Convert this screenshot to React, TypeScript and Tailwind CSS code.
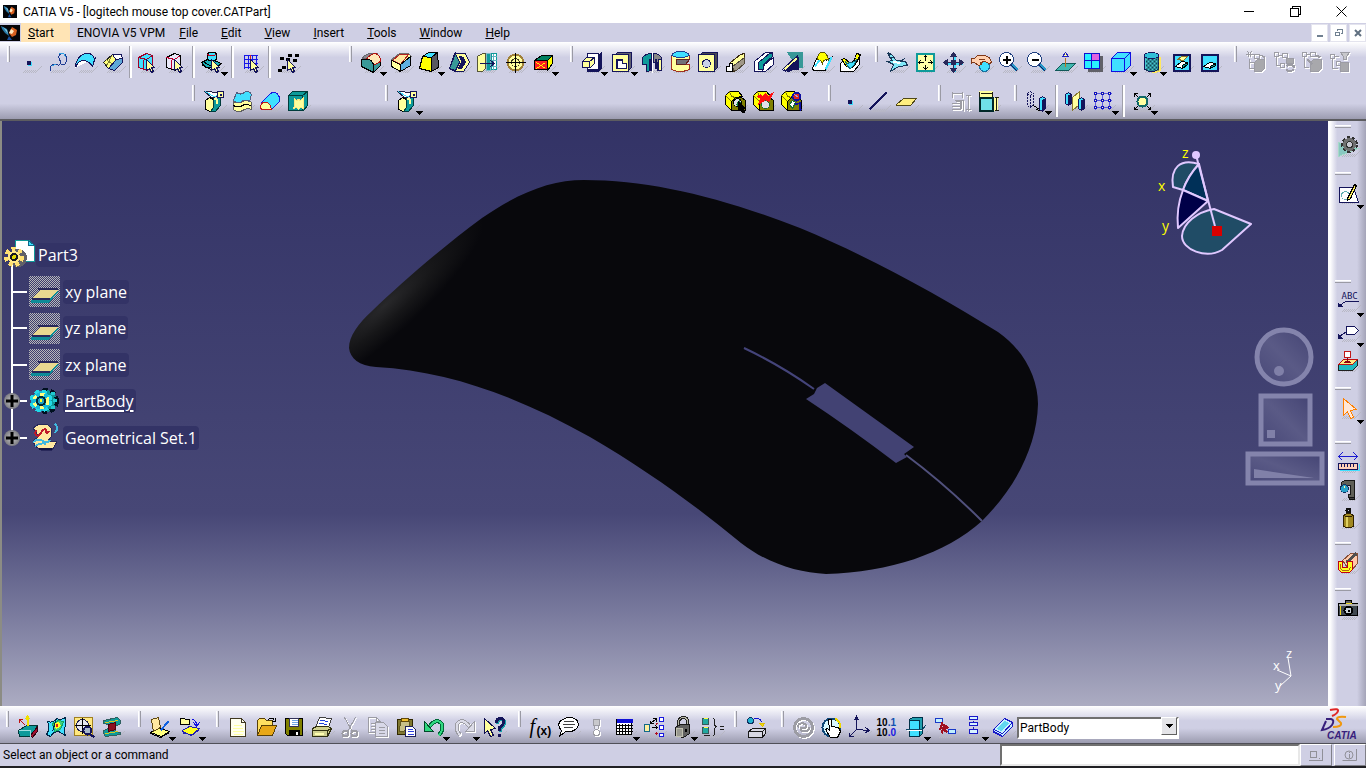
import type { ReactNode } from "react";

const NAVY = "#14145a";
const TEAL = "#0e9a9a";
const CYAN = "#40e0ff";
const CREAM = "#ffff9c";

type ShapeProps = { d: string; f?: string; s?: string; w?: number };

function P({ d, f = "none", s = "currentColor", w = 1 }: ShapeProps) {
  return <path d={d} fill={f} stroke={s} strokeWidth={w} />;
}

const cursor = <P d="M11 9l8 8h-3l2 4-2 1-2-4-3 2z" f={CREAM} />;

const padBody = (
  <>
    <P d="M8 8h10l4 3v10H8z" f="#808000" s="#000" />
    <P d="M2 6l4-4h9l4 5-7 1-4 4v9l-6-6z" f="#ffff00" s="#000" />
    <P d="M2 6l6 6M6 2l2 5 4 1" s="#807800" />
  </>
);

const knife = (
  <>
    <P d="M3 11l4-3 4 2v8l-3 4-5-2z" f={CREAM} s="#000" />
    <P d="M11 9l7-1v8l-5 6H8l3-4z" f={TEAL} s="#003c3c" />
    <P d="M12 9l2 1v4" s={CREAM} w={2} />
    <P d="M2 2l14 1v4l-7 1z" f="#fff" s="#202040" />
    <P d="M3 2l8 5 5-1" s={CYAN} />
    <P d="M15 2h6v6h-6z" f={CREAM} />
    <P d="M18 4v2" w={2} />
  </>
);

const icons: Record<string, ReactNode> = {
  point: (
    <>
      <P d="M10 11h3v3h-3z" f={NAVY} />
      <P d="M14 11v4h-4" s={CYAN} />
    </>
  ),
  spline: (
    <>
      <P d="M5 21q-1-8 5-7 6 2 5-3-4-6 1-8 6 0 5 7-1 5-5 4" s="#1a3890" />
      <P d="M6 16q3-3 5-1M14 3q5-2 6 4" s="#30a0e0" />
    </>
  ),
  surface: (
    <>
      <P d="M2 17q3-8 10-7 4 0 7 5l3-8" f="#fff" s={NAVY} />
      <P d="M2 14q3-11 12-11 6 0 7 6l-2 7q-4-6-9-6t-8 6z" f={CYAN} />
    </>
  ),
  box: (
    <>
      <P d="M2 12L11 4l4 5-8 9z" f="#ffff80" s="#202020" />
      <P d="M11 4h9l1 5-6 1z" f="#fff" />
      <P d="M15 9l6-1v4l-8 8-6-2z" f="#5fa8d8" />
      <P d="M5 9l6 5M10 6l-5 9" s="#808030" />
    </>
  ),
  boxSelect: (
    <>
      <P d="M3 7l8-4 6 2v9l-5 6-9-3z" f={CYAN} s="#a00028" />
      <P d="M3 7l8 2 6-4M8 9v9" s="#a00028" />
      {cursor}
    </>
  ),
  boxOutline: (
    <>
      <P d="M3 7l8-4 6 2v9l-5 6-9-3z" f="#e8e8f8" s="#000" />
      <P d="M3 7l8 2 6-4M8 9v9" s="#c00030" />
      {cursor}
    </>
  ),
  stack: (
    <>
      <P d="M1 12l8-4 12 5-8 6q-3-3-8-2z" f="#18b0b8" s="#000" />
      <P d="M7 3q4-3 9 0v6q-5 3-9 0z" f={CYAN} s="#000" />
      <P d="M7 4q4 3 9 0" s="#c00020" />
      <P d="M4 12l7 4M2 15l9 4" s="#000" />
      {cursor}
    </>
  ),
  gridSelect: (
    <>
      <P d="M5 4v14M9 4v14M13 4v14M17 4v14M4 5h14M4 9h14M4 13h14M4 17h14" s="#1818e8" />
      <P d="M11 4v14" s="#d02020" />
      {cursor}
    </>
  ),
  points: (
    <>
      {[[5, 7], [13, 4], [20, 4], [11, 8], [3, 19], [7, 16], [18, 9]].map(([x, y]) => (
        <rect key={`${x}-${y}`} x={x - 2} y={y - 1} width="4" height="3" fill="#000" />
      ))}
      {cursor}
    </>
  ),
  splitTool: knife,
  thick: (
    <>
      <P d="M3 12q5 3 9 0t9 1v7q-5-2-9 1t-9-1z" f={CREAM} s="#606060" />
      <P d="M6 3q4 3 8 0t7 2l-2 7q-5-3-8 0t-8-1z" f={CYAN} s="#506080" />
      <P d="M3 16q5 3 9 0t9 1" s="#000" />
    </>
  ),
  closeSurface: (
    <>
      <P d="M3 13l9-9q5-3 8 2t0 7l-7 7z" f={CYAN} s="#1818e0" />
      <P d="M2 18q0-6 6-5 4 1 5 7H3z" f={CREAM} s="#c01818" />
    </>
  ),
  sew: (
    <>
      <P d="M2 6l4-4h15v14l-4 5H2z" f={TEAL} s="#003c3c" />
      <P d="M2 6h14v15M16 6l5-4" s="#003c3c" />
      <P d="M8 9l2 2 2-1 2 1 3-3v11l-3-1-2 2-2-2-3 1 1-3z" f={CREAM} s="#ffe880" />
    </>
  ),
  fillet: (
    <>
      <P d="M2 9l3-4 5-2h8l-9 4z" f="#888890" s="#686870" />
      <P d="M13 15l8-4v4l-6 6h-2z" f="#389898" s="#000" />
      <P d="M7 8q5-5 9-5 5 2 5 8l-7 4q-1-6-7-7z" f="#ffe8b8" s="#b01010" />
      <P d="M2 9q11-2 12 6v7L2 16z" f="#389898" s="#000" />
    </>
  ),
  chamfer: (
    <>
      <P d="M2 9l8-6h9l3 3-9 9z" f={CREAM} s="#707070" />
      <P d="M3 10l7-6h9l-8 10z" f="#ffe8a0" s="#b02020" />
      <P d="M11 14l10-8v9l-10 6z" f="#5fb0e0" s="#000" />
      <P d="M2 10l9 4v7l-9-5z" f={CREAM} s="#000" />
    </>
  ),
  draft: (
    <>
      <P d="M5 6l6-4h9l-6 5z" f={CYAN} s="#000" />
      <P d="M5 6l9 1v14L2 18z" f="#ffff00" s="#000" />
      <P d="M14 7l6-5 1 15-7 4z" f="#585860" s="#000" />
    </>
  ),
  shell: (
    <>
      <P d="M2 18L7 3h11l4 9-6 9H7z" f={CREAM} />
      <P d="M8 3L2 18l6 2 4-8z" f="#389898" />
      <P d="M12 6l4 1 2 5-4 6h-3l3-7z" f={NAVY} />
    </>
  ),
  thickness: (
    <>
      <P d="M2 6l5-3h3v15l-3 3H2z" f={CREAM} s="#555538" />
      <P d="M11 3h4v17h-4z" f={TEAL} s="#80b8c8" />
      <P d="M16 3h5v16h-5z" f="#fff" s={TEAL} />
      <P d="M18 3v16M16 6h5M16 10h5M16 16h5" s="#60b0c0" />
      <P d="M4 13h14M15 10l4 3-4 3" s={NAVY} />
    </>
  ),
  thread: (
    <>
      <circle cx="12" cy="12" r="8" fill={CREAM} stroke="#a08038" strokeWidth="2" />
      <circle cx="12" cy="12" r="4" fill="none" stroke="#403820" strokeWidth="1" />
      <P d="M12 2v20M2 12h20" s="#000" />
    </>
  ),
  removeFace: (
    <>
      <P d="M3 10l7-5h11l-5 5z" f="#008060" s="#000" />
      <P d="M16 10l5-5v8l-5 7z" f="#ffff00" s="#000" />
      <P d="M3 10h13v9H3z" f="#ff2020" s="#000" />
      <P d="M5 12l9 6M14 12l-9 6" s="#ffff00" />
    </>
  ),
  pad: (
    <>
      <P d="M7 4h12l2-2v16l-3 3H7z" f={NAVY} />
      <P d="M7 3h11v16H7z" f="#fff" />
      <P d="M2 11l4-4h8v6l-4 4H2z" f={CREAM} />
      <P d="M2 11h7v6M9 11l5-4" />
    </>
  ),
  pocket: (
    <>
      <P d="M5 4l2-2h14v15l-3 3z" f="#606070" />
      <P d="M2 4h16v17H2z" f={CREAM} />
      <P d="M6 9h6v4h4v5H6z" f="#fff" />
      <P d="M6 18V9h6" w={2} />
    </>
  ),
  shaft: (
    <>
      <P d="M2 7q3-4 9-4v17l-5 1v-7H2z" f={TEAL} />
      <P d="M13 3q7 0 8 5v12h-4v-8h-4z" f="#888" />
      <P d="M18 9v11h3V9z" f={CREAM} />
      <P d="M9 8v12M15 8v10" w={2} />
      <P d="M12 1v21" s="#fff" />
    </>
  ),
  groove: (
    <>
      <P d="M3 5v14q8 4 18 0v-5H11V9h10V5z" f={CREAM} s="#a03020" />
      <P d="M3 5q2-4 9-4t9 4q-9 4-18 0z" f={CYAN} s="#204090" />
      <P d="M8 9h13l-4 5H8z" f="#707078" s="#602020" />
    </>
  ),
  hole: (
    <>
      <P d="M4 4l2-2h15v15l-3 3z" f="#484850" />
      <P d="M2 4h16v17H2z" f={CREAM} />
      <circle cx="10" cy="13" r="4" fill="#c8d0e8" stroke={NAVY} />
    </>
  ),
  rib: (
    <>
      <P d="M2 16h4v-4L16 4l4-1v4L10 16v5H2z" f={CREAM} s="#382810" />
      <P d="M8 16l12-9v6l-8 7H9z" f="#a09888" s="#504838" />
      <P d="M2 16h3v-3h3v8H2z" f="#fff" s="#000" />
    </>
  ),
  slot: (
    <>
      <P d="M2 11L13 2h7v4l-8 7v8H2z" f="#fff" />
      <P d="M6 12L17 3h3v3l-9 8v5H6z" f={TEAL} />
      <P d="M12 14l9-7v7l-8 7h-3z" f="#fff" />
    </>
  ),
  stiffener: (
    <>
      <P d="M7 2h15v15H17z" f="#389898" s="#389898" />
      <P d="M2 19L17 5l1 6-13 10z" f="#fff" />
      <P d="M6 20L18 7v12h-5l-5 2z" f={NAVY} />
      <P d="M3 18L16 6l1 3L5 20z" f={CREAM} />
    </>
  ),
  multiSection: (
    <>
      <P d="M2 18l4-10 3 3 4-4 3 3 5-3-6 13H3z" f="#fff" s="#000" />
      <P d="M7 9q0-7 5-7t6 8q-4-3-6 3-2-4-5-4z" f="#ffff00" s="#605800" />
      <P d="M4 16l5-6M21 7l-6 12" s={CYAN} w={2} />
    </>
  ),
  removeLoft: (
    <>
      <P d="M2 13l4-4 4 4h5l6-7v8l-6 7H2z" f="#fff" s="#000" />
      <P d="M3 9l3-1 5 4q3 2 6-5l1-4 4 1-4 8-4 5-6-1z" f="#ffff00" s="#000" />
      <P d="M7 11q2 6 5 7 4-3 6-9-4 4-6 3l-4 1z" f={CYAN} s="#106878" />
    </>
  ),
  padSelect: (
    <>
      {padBody}
      <ellipse cx="14" cy="13" rx="4" ry="4" fill="#e0e0e8" stroke="#000" />
      <P d="M13 15l3-4 1 3-2 3z" f="#108040" s="#108040" />
      <P d="M15 12l7 7h-3l2 4h-2l-2-3-2 1z" f="#000" s="#000" />
    </>
  ),
  padFlash: (
    <>
      {padBody}
      <ellipse cx="14" cy="15" rx="4" ry="4" fill="#e0e0e8" stroke="#107030" />
      <P d="M9 5l2 2 3-3 3 3 5-4-5 9-3-2-7 5 2-6-3-2z" f="#ff1010" s="#ff1010" />
    </>
  ),
  padBall: (
    <>
      {padBody}
      <P d="M10 15l3-4 3 2-3 6z" f="#fff" s="#107030" />
      <circle cx="17" cy="7" r="4" fill="#e02020" stroke="#1010a0" strokeWidth="2" />
      <P d="M15 5l4 3" s="#a0a0e8" />
      <P d="M20 12v7l2 2M16 14l3 1" s="#1010a0" w={2} />
    </>
  ),
  plane3: <P d="M2 15l7-6h13l-6 7H2z" f="#ffee80" s="#504818" />,
  line: <P d="M3 20L20 3" w={2} />,
  fly: (
    <>
      <P d="M2 3l4 1 5 6 9 1 2 4-9 1-8 5 3-7-6-3 5-1z" f="#80e8f8" s="#183858" />
      <P d="M3 2l4 3M3 7h4M14 12l6-5" s="#183858" />
      <P d="M8 11l7 2" s="#fff" w={2} />
    </>
  ),
  fitAll: (
    <>
      <P d="M3 3h17v17H3z" f="#ffffa8" s={TEAL} w={2} />
      <P d="M12 5v5M12 19v-5M5 12h5M19 12h-5M10 7l2-2 2 2M10 17l2 2 2-2M7 10l-2 2 2 2M17 10l2 2-2 2" s="#000" />
    </>
  ),
  pan: (
    <>
      <P d="M13 4v17M4 13h17" s={CYAN} w={2} />
      <P d="M12 3v18M3 12h18" s="#28285a" />
      <P d="M9 6l3-4 3 4zM9 18l3 4 3-4zM6 9l-4 3 4 3zM18 9l4 3-4 3zM10 10h4v4h-4z" f="#28285a" s="#28285a" />
    </>
  ),
  rotate: (
    <>
      <circle cx="15" cy="16" r="5" fill={CYAN} stroke="#1870a0" />
      <P d="M2 8h3l3-3h7q6 1 7 7l-2 1-5-2-4 1 1 2-3 1-4-3H2z" f="#ffd0b0" s="#803818" />
      <P d="M9 9h6M2 8v5" s="#803818" />
    </>
  ),
  zoomIn: (
    <>
      <P d="M14 14l6 6" s="#2898c8" w={4} />
      <P d="M14 15l6 6" s={NAVY} />
      <circle cx="9" cy="9" r="7" fill="#fff" stroke="#204080" />
      <P d="M5 9h8M9 5v8" s="#000" w={2} />
    </>
  ),
  zoomOut: (
    <>
      <P d="M14 14l6 6" s="#2898c8" w={4} />
      <P d="M14 15l6 6" s={NAVY} />
      <circle cx="9" cy="9" r="7" fill="#fff" stroke="#204080" />
      <P d="M6 9h7" s="#000" w={2} />
    </>
  ),
  normalView: (
    <>
      <P d="M2 20l7-7h13l-7 7z" f="#40b8b0" s="#105858" />
      <P d="M12 7v9" s="#c07020" />
      <P d="M9 6l3-4 3 4z" f="#ffffa0" s="#2020c0" />
    </>
  ),
  multiView: (
    <>
      <P d="M7 6h14v15H7z" f="#606068" s="#606068" />
      <P d="M3 3h15v15H3z" f="#28f0ff" s="#1010d0" />
      <P d="M11 4h6v6h-6z" f="#e060e0" s="#e060e0" />
      <P d="M3 10h15M10 3v15" s="#1010d0" />
    </>
  ),
  isoView: (
    <>
      <P d="M2 8l6-6h13v13l-6 6H2z" f={CYAN} s="#1010e0" />
      <P d="M2 8h13v13M15 8l6-6" s="#1010e0" />
    </>
  ),
  shading: (
    <>
      <P d="M20 6v14q-3 2-8 2" s="#ffe860" w={2} />
      <P d="M5 5v14q7 4 14 0V5z" f="#48c8d0" s={NAVY} />
      <path d="M6 7h13v13H6z" fill="url(#weave)" />
      <ellipse cx="12" cy="5" rx="7" ry="3" fill="#30c0d8" stroke={NAVY} />
    </>
  ),
  hideShow: (
    <>
      <P d="M4 4h16v16H4z" f={CYAN} s={NAVY} w={2} />
      <P d="M8 9l4-3h6l-4 4z" f={CREAM} s="#887028" />
      <P d="M6 16l6-5 6 1v2l-5 4z" f="#fff" s="#000" />
      <P d="M13 15l5-3v2l-5 4z" f={TEAL} s="#000" />
    </>
  ),
  swapVisible: (
    <>
      <P d="M4 4h16v16H4z" f={CYAN} s={NAVY} w={2} />
      <P d="M6 16l6-4 6 1v2l-5 3z" f="#fff" s="#000" />
      <P d="M13 16l5-3v2l-5 3z" f={TEAL} s="#000" />
    </>
  ),
  treeA: (
    <>
      <P d="M3 1l4 6M7 1L3 7M1 4h8M5 8v10h5M5 12h4M10 4h5v4h-5z" />
      <P d="M10 12l3-3h7v9l-3 3h-7zM16 5l4 1v3" f="#a8a8ac" />
    </>
  ),
  treeB: (
    <>
      <P d="M2 2h4v4H2zM4 6v9h4M6 5h4M10 3h5v4h-5zM8 13h4v4H8z" />
      <P d="M14 8h7v5h-7z" f="#a8a8ac" />
      <P d="M14 16q4-4 7 0M21 19q-4 4-7 0M21 14v3" w={2} />
    </>
  ),
  treeC: (
    <>
      <P d="M2 2h4v4H2zM4 6v11h4M6 4h4M10 2h5v4h-5z" />
      <P d="M10 12l3-3h8v9l-3 3h-8z" f="#a8a8ac" />
      <P d="M7 9l5 5M16 5l4 2" w={2} />
    </>
  ),
  treeD: (
    <>
      <P d="M2 4h4v4H2zM4 8v10h5M6 6h4M8 11h4v4H8z" />
      <P d="M12 12h8v9h-8z" f="#a8a8ac" />
      <P d="M12 2h9l-3 4v3h-3V6z" f="#c8c8cc" />
    </>
  ),
  dimDisabled: (
    <>
      <P d="M4 2v6M14 2v6M4 4h10M6 11h9v10M3 14h9M3 17h9M3 20h9M20 5v16M17 6h5M17 20h5" />
      <P d="M7 11h5v8" w={2} />
    </>
  ),
  dimension: (
    <>
      <P d="M3 2h13v5H3z" f={CREAM} s={CREAM} />
      <P d="M3 2v5M16 2v5M4 4h11" s="#202010" />
      <P d="M3 8h13v13H3z" f="#70e0e8" s="#002828" w={2} />
      <P d="M18 9h3v12h-3z" f={CREAM} s={CREAM} />
      <P d="M20 8v13M18 8h4M18 21h4" s="#202010" />
    </>
  ),
  translate: (
    <>
      <path d="M3 4l3-2 3 2v11l-3 3-3-2zM3 4l3 2 3-2M6 6v11" fill="none" stroke={NAVY} strokeDasharray="2 1" />
      <P d="M9 16l6 4M12 20l3 1v-3" s="#000" />
      <P d="M15 9l3-2 3 2v10l-3 3-3-2z" f={CYAN} />
      <P d="M18 11l3-2v10l-3 3z" f={NAVY} />
    </>
  ),
  mirror: (
    <>
      <P d="M2 5l3-2 3 2v9l-3 2-3-2z" f={CYAN} />
      <P d="M5 6l3-1v9l-3 2z" f={NAVY} />
      <P d="M9 8l7-6v13l-7 6z" f={CREAM} s="#887830" />
      <P d="M15 10l3-2 3 2v9l-3 2-3-2z" f={CYAN} />
      <P d="M18 11l3-1v9l-3 2z" f={NAVY} />
    </>
  ),
  pattern: (
    <>
      <P d="M4 2v18M11 2v18M18 2v18M2 4h18M2 11h18M2 18h18" s="#5858e0" />
      {[4, 11, 18].map((x) =>
        [4, 11, 18].map((y) => (
          <rect key={`${x}-${y}`} x={x - 1} y={y - 1} width="2" height="2" fill={CREAM} stroke="#1010c0" />
        ))
      )}
    </>
  ),
  scale: (
    <>
      <P d="M4 4l4 4M20 4l-4 4M4 20l4-4M20 20l-4-4M4 7V4h3M17 4h3v3M4 17v3h3M20 17v3h-3" s="#000" />
      <circle cx="12" cy="12" r="5" fill="#ffffa0" stroke="#106868" strokeWidth="2" />
    </>
  ),
  apply: (
    <>
      <P d="M2 15l8-5h11l-6 11H3z" f={TEAL} s="#003838" />
      <P d="M14 20l7-9v5l-5 6z" f="#a01030" s="#300010" />
      <P d="M2 15h12v6" s="#a0e0e0" />
      <P d="M9 10L3 4M3 7V4h3" s="#c01010" />
      <P d="M11 10V2M9 4l2-3 2 3" s="#f0e000" w={2} />
    </>
  ),
  analysis: (
    <>
      <P d="M3 6q6 2 9-3 5 2 9-1v8q-2 5 0 10l-7-4q-5 0-8 5l-4-2q4-6 1-13z" f={CYAN} s="#002848" />
      <P d="M8 8l6-3 5 1-3 8-6 2z" f="#40d080" s="#10a860" />
      <P d="M10 9l4-2 2 3-4 3z" f="#ffff20" s="#ffff20" />
      <P d="M12 9h1v2h-1z" f="#e02010" s="#e02010" />
      <P d="M12 3l-4 13" s="#002848" />
    </>
  ),
  target: (
    <>
      <P d="M2 2h18v18H2z" f="#ffe880" s="#a08020" />
      <circle cx="10" cy="10" r="6" fill="#e8e8f0" stroke="#202050" />
      <P d="M10 2v16M2 10h16" s="#000" />
      <circle cx="15" cy="15" r="4" fill="#a8b8c8" stroke={NAVY} strokeWidth="2" />
      <P d="M18 19l4 3" w={2} />
    </>
  ),
  beam: (
    <>
      <P d="M3 5l14-3 3 3v3l-5 3v5l5 1v2L5 21l-2-3v-3l5-2V9L3 8z" f={TEAL} s="#306060" />
      <P d="M8 9l7-2v7l-7 2z" f="#8c1020" s="#500010" />
      <P d="M5 7l13-2M5 18l13-2" s="#d8c820" />
    </>
  ),
  catalog: (
    <>
      <P d="M2 17l8-5 11 4-8 5z" f="#ffff80" s="#000" />
      <P d="M3 4l7-2 2 10-7 4z" f="#ffe8a0" s="#604810" />
      <P d="M12 15l8-9" s="#1060e0" w={2} />
      <P d="M2 18l10 4 9-5" s="#000" />
    </>
  ),
  folderMove: (
    <>
      <P d="M2 3h4l1 1h4v5H2z" f={CREAM} s="#000" />
      <P d="M13 4q5 0 5 6M15 7l3 4 3-4" s="#1010e0" />
      <P d="M4 15l7-4 10 2-7 6-9-1z" f="#ffff20" s="#2020b0" />
      <P d="M4 16l9 4 8-6" s="#2020b0" />
    </>
  ),
  newDoc: (
    <>
      <P d="M4 3h11l4 4v14H4z" f="#fffff0" s="#403820" />
      <P d="M15 3v4h4" s="#403820" />
      <P d="M7 10h8M6 13h10M6 16h11M7 19h9" s="#ffffa0" />
    </>
  ),
  open: (
    <>
      <P d="M3 5l2-2h5l2 2h6v15H3z" f="#ffe060" s="#584008" />
      <P d="M3 20l4-10h15l-4 10z" f="#e8a818" s="#584008" />
      <P d="M14 4q4-3 6 1M21 2v4h-4" s="#000" />
    </>
  ),
  save: (
    <>
      <P d="M3 3h17v17H5l-2-2z" f="#808000" s="#000" />
      <P d="M7 3h9v8H7z" f="#fff" s="#303058" />
      <P d="M9 5h6M9 7h6M9 9h6" s="#70a8e8" />
      <P d="M7 15h10v5H7z" f="#000" s="#000" />
      <P d="M14 16v3" s="#fff" w={2} />
    </>
  ),
  print: (
    <>
      <P d="M9 2l12 1-3 9H5z" f="#fff" s="#404040" />
      <P d="M10 5l8 1M9 8l8 1" s="#2040e0" />
      <P d="M2 13l4-2h12l3 2-4 8H2z" f="#d0d090" s="#303010" />
      <P d="M2 15h15v6M17 15l4-2" s="#303010" />
      <P d="M4 18h9" s="#ffffb0" w={2} />
    </>
  ),
  cut: (
    <>
      <P d="M6 2l8 14M17 2L9 16" />
      <circle cx="7" cy="18" r="3" fill="none" stroke="currentColor" strokeWidth="2" />
      <circle cx="16" cy="18" r="3" fill="none" stroke="currentColor" strokeWidth="2" />
    </>
  ),
  copy: (
    <>
      <P d="M2 2h8l4 4v11H2zM10 2v4h4M4 8h7M4 11h7M4 14h7" />
      <P d="M9 7h8l4 4v10H9z" f="#d8d8e8" />
      <P d="M12 12h6M12 15h6M12 18h6" />
    </>
  ),
  paste: (
    <>
      <P d="M3 4h15v15H3z" f="#807830" s="#302800" />
      <P d="M6 6h9v5l-6 5H5z" f="#c8c088" s="#605820" />
      <P d="M7 3h7v3H7z" f="#f0c030" s="#604808" />
      <P d="M11 11h7l3 3v7H11z" f="#fff" s="#202058" />
      <P d="M13 14h5M13 16h6M13 19h6" s="#3040e0" />
    </>
  ),
  undo: (
    <>
      <P d="M7 11q7-9 12-3 3 6-3 12" s="#006838" w={4} />
      <P d="M7 11q7-9 12-3 3 6-3 12" s="#30d880" w={2} />
      <P d="M2 6v10h9z" f="#30d880" s="#004828" />
    </>
  ),
  redo: (
    <>
      <P d="M17 11q-7-9-12-3-3 6 3 12" w={4} />
      <P d="M17 11q-7-9-12-3-3 6 3 12" s="#dcdce8" w={2} />
      <P d="M22 6v10h-9z" f="#dcdce8" />
    </>
  ),
  whatsThis: (
    <>
      <P d="M2 3l11 10-5 1 3 6-3 1-3-6-3 3z" f={CREAM} s="#101050" />
      <P d="M15 8q0-4 4-4t3 4q0 2-4 5v3" s="#18a0a8" w={3} />
      <P d="M14 7q0-4 4-4t3 4q0 2-4 5v3M17 18v3" s={NAVY} w={3} />
    </>
  ),
  formula: (
    <g shapeRendering="auto">
      <text x="1" y="17" className="font-['Liberation_Serif',serif] text-[20px] italic" fill="#000">f</text>
      <text x="8" y="19" className="font-['Liberation_Sans',sans-serif] text-[12px] font-bold" fill="#000">(x)</text>
    </g>
  ),
  comment: (
    <>
      <P d="M5 15q-6-7 1-11 7-4 14 0 4 6-1 10-4 3-10 2l-6 5z" f="#fff" s="#000" />
      <P d="M7 6h10M6 9h12M7 12h9" s="#404040" />
    </>
  ),
  trafficOff: (
    <>
      <P d="M9 4h6v6H9z" f="#c8c8cc" />
      <circle cx="12" cy="12" r="2" fill="#e8e8f4" stroke="currentColor" />
      <circle cx="12" cy="17" r="3" fill="#fff" stroke="currentColor" />
    </>
  ),
  table: (
    <>
      <P d="M4 4h15v15H4z" f="#fff" s="#000" />
      <P d="M4 5h16" s="#1010d8" w={4} />
      <P d="M7 8v11M10 8v11M13 8v11M16 8v11M4 10h16M4 13h16M4 16h16" s="#000" />
    </>
  ),
  relations: (
    <>
      <P d="M2 9h5v7H2z" f="#fff0a0" s="#106888" />
      <P d="M17 2h4v4h-4zM17 10h4v4h-4zM17 18h4v3h-4z" f="#fff" s="#1818e0" />
      <P d="M9 12h6M13 10l2 2-2 2M8 8l6-5M10 3h4v3M8 8V5M8 8h3" s="#000" />
      <P d="M14 7v2M13 8h2M14 16v3M12 18h3" s="#b01020" />
    </>
  ),
  lock: (
    <>
      <P d="M8 10V6q1-4 5-4t4 4v5" s="#202020" w={3} />
      <P d="M8 10V6q1-4 5-4t4 4v5" s="#b8b8a8" />
      <P d="M5 12l5-3h9v9l-6 4-8-2z" f="#606060" s="#181818" />
      <P d="M6 13h6v8H6z" f="#989890" s="#c0c0b0" />
      <P d="M15 13v3" s="#000" w={2} />
    </>
  ),
  equiv: (
    <>
      <P d="M2 3h6v6H2zM2 12h6v6H2z" f="#20a8a0" s="#385858" />
      <P d="M3 3h4M3 12h4" s="#ffff40" />
      <P d="M12 3q3 0 2 5 0 3 2 3-2 0-2 4 1 5-2 5M19 11h4M19 14h4M3 20h6" s="#202020" />
    </>
  ),
  publish: (
    <>
      <circle cx="6" cy="5" r="3" fill="#20b0d0" stroke="#103060" />
      <P d="M10 3q6-1 7 4" s="#1010d0" />
      <P d="M15 8h5l-2 3z" f="#f0d810" s="#e0c000" />
      <P d="M4 16l4-3h13v5l-3 4H4zM4 16h14v6M18 16l3-3" f="#d8d8e4" s="#181818" />
    </>
  ),
  updateOff: (
    <>
      <circle cx="12" cy="12" r="9" fill="none" stroke="currentColor" strokeWidth="3" />
      <P d="M6 12q1-5 6-4 5 2 2 4H9q0 4 4 4 4 0 5-4" w={2} />
    </>
  ),
  manualUpdate: (
    <>
      <circle cx="12" cy="12" r="9" fill="#d8f8ff" stroke="#104878" strokeWidth="2" />
      <P d="M16 3q5 3 5 9" s="#f0d800" w={2} />
      <P d="M9 4h3v7l7 1 2 4-3 6h-7l-5-8 2-1 2 2z" f="#fff" s="#000" />
    </>
  ),
  axis: <P d="M9 2v12M9 14l12 1M9 14l-7 7M7 5l2-4 2 4M18 12l4 3-4 2M2 17v4h4" />,
  decimals: (
    <g shapeRendering="auto" className="font-['Liberation_Sans',sans-serif] text-[10px] font-bold">
      <text x="1" y="10" fill="#000">10<tspan fill="#1050b0">.1</tspan></text>
      <text x="1" y="20" fill="#000">10<tspan fill="#1818e0">.0</tspan></text>
    </g>
  ),
  plane: (
    <>
      <P d="M6 4l3-2h10v16l-3 3H6z" f="#20a0b0" s="#003048" />
      <P d="M6 5h10v16H6z" f={CYAN} s="#003048" />
      <P d="M2 14h17l3-4" s="#104868" />
      <P d="M3 15h15" s="#fff" />
    </>
  ),
  linkBreak: (
    <>
      <P d="M2 3h7v4H2zM15 14h7v4h-7z" f="#c0f0ff" s="#1838c8" />
      <P d="M9 7l-2 6 3-1-2 6M10 9l4 3-4 2 4 3" s="#a01020" w={2} />
    </>
  ),
  list: (
    <>
      <P d="M8 1h8v3H8zM8 7h8v3H8zM8 14h8v4H8z" f="#d8f4ff" s="#1818c8" />
      <P d="M12 5v1M12 11v2" s="#2028b0" />
    </>
  ),
  book: (
    <>
      <P d="M2 14L13 3l8 4v4L11 21l-9-4z" f="#c8f4ff" s="#1818c8" />
      <P d="M2 14l9 4L21 7M2 16l9 4" s="#1818c8" />
      <P d="M6 13l7-7 4 2-7 7z" f="#60d8f0" s="#60d8f0" />
    </>
  ),
  gear: (
    <>
      <P d="M2 8v14l20-8z" f="#88c8c0" s="#a8d8c8" />
      <circle cx="13" cy="10" r="7" fill="none" stroke="#303030" strokeWidth="3" strokeDasharray="3 2" />
      <circle cx="13" cy="10" r="5" fill="none" stroke="#707070" strokeWidth="3" />
      <circle cx="13" cy="10" r="3" fill="#c8c8d0" stroke="#303030" />
    </>
  ),
  sketch: (
    <>
      <P d="M3 6h14l5 15H3z" f="#fff" s={NAVY} />
      <circle cx="9" cy="14" r="4" fill="none" stroke="#60b0b0" />
      <P d="M11 17L18 3l2 1-6 13-3 2z" f="#fff060" s="#000" />
    </>
  ),
  textNote: (
    <g>
      <text x="5" y="9" className="font-['DejaVu_Sans_Mono',monospace] text-[9px]" fill={NAVY}>ABC</text>
      <P d="M22 12H9l-6 4" />
      <P d="M2 14v3h4z" f={NAVY} />
    </g>
  ),
  flagNote: (
    <>
      <P d="M10 7h8l4 4-4 4h-8z" f="#fff" />
      <P d="M10 12l-7 5" />
      <P d="M2 15v4h4z" f={NAVY} />
    </>
  ),
  stamp: (
    <>
      <P d="M2 15l5-5h14v6l-5 5H2z" f="#20b8c0" s="#202020" />
      <P d="M2 15l5-5h14l-5 5z" f="#ffe880" s="#c01010" />
      <P d="M8 2h6v6H8z" f="#fff" s="#c01818" />
      <P d="M11 8v4M8 13l3-2 3 2z" f="#800" s="#900010" />
    </>
  ),
  arrow: <P d="M7 2v17l4-4 3 7 3-1-3-7 6-1z" f="#ffe8d8" s="#ff8000" />,
  ruler: (
    <>
      <P d="M2 6h19M6 2L2 6l4 4M17 2l4 4-4 4" s="#1818d0" />
      <P d="M3 20h20v-7" s={CYAN} />
      <P d="M2 13h19v6H2z" f="#ffd0b8" s={NAVY} />
      <P d="M5 13v3M8 13v3M11 13v3M14 13v3M17 13v3" />
    </>
  ),
  clamp: (
    <>
      <P d="M5 4l3-2h10v17h-6v-3h2V7H7v2H5z" f="#606058" s="#181818" />
      <P d="M13 19h5v2h-5z" f="#404040" s="#101010" />
      <circle cx="8" cy="10" r="4" fill="#28a0c8" stroke="#103060" />
      <P d="M7 8h1" s="#ffffa0" w={2} />
    </>
  ),
  weight: (
    <>
      <circle cx="12" cy="4" r="2" fill="none" stroke="#101010" strokeWidth="2" />
      <P d="M7 9q5-4 10 0v11q-5 3-10 0z" f="#a08820" s="#302000" />
      <P d="M10 9v11" s="#e0d060" w={2} />
      <P d="M7 9q5 3 10 0" s="#302000" />
    </>
  ),
  magnet: (
    <>
      <P d="M6 9l8-7h7v10l-7 8z" f="#ffc8a8" s="#885038" />
      <P d="M10 11l10-9" s="#505050" w={3} />
      <P d="M2 10h4v6h5v-6h5v8l-3 3H5l-3-3z" f="#ffff20" s="#c00010" />
      <P d="M4 12v5l2 2h6l2-3" s="#b06010" />
    </>
  ),
  camera: (
    <>
      <P d="M2 6h19v12H2z" f="#404850" s="#000" />
      <P d="M9 3h6v3H9z" f="#606060" s="#000" />
      <P d="M2 7h19" s="#b0b0b0" w={2} />
      <P d="M4 8v9M9 6h6" s="#f0d820" />
      <circle cx="12" cy="13" r="4" fill="#c8d0d8" stroke="#000" strokeWidth="2" />
      <P d="M11 13h2" s="#000" w={2} />
    </>
  )
};

type Item = { icon: string; label: string; arrow?: boolean; off?: boolean };

function Icon({ name, off }: { name: string; off?: boolean }) {
  return (
    <svg
      viewBox="0 0 24 24"
      shapeRendering="crispEdges"
      className={off ? "size-6 overflow-visible text-[#9c9ca4] drop-shadow-[1px_1px_0_white]" : "size-6 overflow-visible text-[#14145a]"}
      aria-hidden="true"
    >
      {off ? null : <path d="M5 23l4-3h10l6-6v4l-6 5z" fill="url(#dither)" />}
      <g transform="translate(0.5 0.5)">{icons[name]}</g>
    </svg>
  );
}

function DropMark({ className }: { className: string }) {
  return (
    <svg viewBox="0 0 7 4" className={`absolute h-1 w-[7px] ${className}`} shapeRendering="crispEdges" aria-hidden="true">
      <path d="M0 0h7L4 4H3z" fill="#000" />
    </svg>
  );
}

function Tool({ item }: { item: Item }) {
  return (
    <button
      type="button"
      aria-label={item.label}
      disabled={item.off}
      className={item.arrow ? "relative flex h-8 w-[30px] shrink-0 items-center pl-0.5" : "flex h-8 w-7 shrink-0 items-center justify-center"}
    >
      <Icon name={item.icon} off={item.off} />
      {item.arrow ? <DropMark className="top-[26px] left-[23px]" /> : null}
    </button>
  );
}

function Group({ items, className = "" }: { items: Item[]; className?: string }) {
  return (
    <div role="toolbar" className={`flex shrink-0 ${className}`}>
      <div className="w-2 shrink-0">
        <div className="h-4 w-[3px] border-r border-l border-r-[#9a9aa4] border-l-white bg-[#e8e8f0]" />
      </div>
      {items.map((item) => (
        <Tool key={item.label} item={item} />
      ))}
    </div>
  );
}

function Divider({ tight }: { tight?: boolean }) {
  return (
    <div className={tight ? "flex h-8 w-1.5 shrink-0 justify-center" : "flex h-8 w-[9px] shrink-0 justify-center"}>
      <div className="w-[3px] border-l border-[#a0a0aa] bg-white" />
    </div>
  );
}

function SideGroup({ items, className = "" }: { items: Item[]; className?: string }) {
  return (
    <div role="toolbar" className={className}>
      <div className="h-[7px] pl-[5px]">
        <div className="h-[3px] w-4 border-t border-b border-t-white border-b-[#9a9aa4] bg-[#e8e8f0]" />
      </div>
      {items.map((item) => (
        <button
          key={item.label}
          type="button"
          aria-label={item.label}
          className={item.arrow ? "relative flex h-[30px] w-full justify-center pt-0.5" : "relative flex h-7 w-full justify-center pt-0.5"}
        >
          <Icon name={item.icon} />
          {item.arrow ? <DropMark className="right-0.5 bottom-0" /> : null}
        </button>
      ))}
    </div>
  );
}

const wireframe: Item[] = [
  { icon: "point", label: "Point filter" },
  { icon: "spline", label: "Curve filter" },
  { icon: "surface", label: "Surface filter" },
  { icon: "box", label: "Volume filter" }
];
const dressUp: Item[] = [
  { icon: "fillet", label: "Edge fillet", arrow: true },
  { icon: "chamfer", label: "Chamfer" },
  { icon: "draft", label: "Draft angle", arrow: true },
  { icon: "shell", label: "Shell" },
  { icon: "thickness", label: "Thickness" },
  { icon: "thread", label: "Thread/Tap" },
  { icon: "removeFace", label: "Remove face", arrow: true }
];
const sketchBased: Item[] = [
  { icon: "pad", label: "Pad", arrow: true },
  { icon: "pocket", label: "Pocket", arrow: true },
  { icon: "shaft", label: "Shaft" },
  { icon: "groove", label: "Groove" },
  { icon: "hole", label: "Hole" },
  { icon: "rib", label: "Rib" },
  { icon: "slot", label: "Slot" },
  { icon: "stiffener", label: "Stiffener", arrow: true },
  { icon: "multiSection", label: "Multi-sections solid" },
  { icon: "removeLoft", label: "Removed multi-sections solid" }
];
const view: Item[] = [
  { icon: "fly", label: "Fly mode" },
  { icon: "fitAll", label: "Fit all in" },
  { icon: "pan", label: "Pan" },
  { icon: "rotate", label: "Rotate" },
  { icon: "zoomIn", label: "Zoom in" },
  { icon: "zoomOut", label: "Zoom out" },
  { icon: "normalView", label: "Normal view" },
  { icon: "multiView", label: "Multi-view" },
  { icon: "isoView", label: "Isometric view", arrow: true },
  { icon: "shading", label: "Shading", arrow: true },
  { icon: "hideShow", label: "Hide/Show" },
  { icon: "swapVisible", label: "Swap visible space" }
];
const treeTools: Item[] = [
  { icon: "treeA", label: "Graph tree", off: true },
  { icon: "treeB", label: "Reorder tree", off: true },
  { icon: "treeC", label: "Expand tree", off: true },
  { icon: "treeD", label: "Filter tree", off: true }
];

const surfaceBased: Item[] = [
  { icon: "splitTool", label: "Split" },
  { icon: "thick", label: "Thick surface" },
  { icon: "closeSurface", label: "Close surface" },
  { icon: "sew", label: "Sew surface" }
];
const annotations: Item[] = [
  { icon: "padSelect", label: "Between section" },
  { icon: "padFlash", label: "Update error" },
  { icon: "padBall", label: "Scan" }
];
const reference: Item[] = [
  { icon: "point", label: "Point" },
  { icon: "line", label: "Line" },
  { icon: "plane3", label: "Plane" }
];

const standard: Item[] = [
  { icon: "newDoc", label: "New" },
  { icon: "open", label: "Open" },
  { icon: "save", label: "Save" },
  { icon: "print", label: "Print" },
  { icon: "cut", label: "Cut", off: true },
  { icon: "copy", label: "Copy", off: true },
  { icon: "paste", label: "Paste" },
  { icon: "undo", label: "Undo", arrow: true },
  { icon: "redo", label: "Redo", arrow: true, off: true },
  { icon: "whatsThis", label: "What's this?" }
];
const knowledge: Item[] = [
  { icon: "formula", label: "Formula" },
  { icon: "comment", label: "Comment & URLs" },
  { icon: "trafficOff", label: "Check analysis", off: true },
  { icon: "table", label: "Design table", arrow: true },
  { icon: "relations", label: "Knowledge inspector" },
  { icon: "lock", label: "Lock parameters", arrow: true },
  { icon: "equiv", label: "Equivalent dimensions" }
];
const tools: Item[] = [
  { icon: "updateOff", label: "Update all", off: true },
  { icon: "manualUpdate", label: "Manual update" },
  { icon: "axis", label: "Axis system" },
  { icon: "decimals", label: "Mean dimensions" },
  { icon: "plane", label: "Create datum", arrow: true },
  { icon: "linkBreak", label: "Only current body" },
  { icon: "list", label: "Insert in body", arrow: true },
  { icon: "book", label: "Open catalog" }
];

const menus = ["File", "Edit", "View", "Insert", "Tools", "Window", "Help"];

function AppMark({ className }: { className: string }) {
  return (
    <svg viewBox="0 0 20 16" preserveAspectRatio="none" className={className} aria-hidden="true">
      <rect width="20" height="16" fill="#050508" />
      <path d="M1 1l6 3 2 7-4-3-3-4z" fill="#2878a8" />
      <path d="M3 2l4 3 1 4z" fill="#80c8e0" />
      <path d="M12 2l5 3-1 5-4 2-3-4z" fill="#d86020" />
      <path d="M11 4l3 2-2 3-3-1z" fill="#ffe8c0" />
      <path d="M9 11l3 4h-5z" fill="#1850a0" />
    </svg>
  );
}

function TitleBar() {
  return (
    <header className="flex h-[23px] shrink-0 items-center bg-white">
      <AppMark className="ml-[3px] h-[13px] w-[14px]" />
      <h1 className="ml-1.5 flex-1 truncate text-[12px]">CATIA V5 - [logitech mouse top cover.CATPart]</h1>
      <div className="flex h-full pr-0.5">
        <button type="button" aria-label="Minimize" className="flex w-[46px] items-center justify-center">
          <span className="h-px w-[10px] bg-black" />
        </button>
        <button type="button" aria-label="Restore" className="flex w-[46px] items-center justify-center">
          <svg viewBox="0 0 11 11" className="size-[11px]" fill="none" stroke="#000" shapeRendering="crispEdges">
            <path d="M0.5 2.5h8v8h-8zM2.5 2.5v-2h8v8h-2" />
          </svg>
        </button>
        <button type="button" aria-label="Close" className="flex w-[46px] items-center justify-center">
          <svg viewBox="0 0 11 11" className="size-[11px]" fill="none" stroke="#000">
            <path d="M0.5 0.5l10 10M10.5 0.5l-10 10" />
          </svg>
        </button>
      </div>
    </header>
  );
}

function MenuBar() {
  const box = "flex h-[18px] w-[17px] items-center justify-center border border-[#e4e4ee] bg-white";
  return (
    <nav className="flex h-[19px] shrink-0 items-center bg-[#cfcfe4] text-[12px]">
      <AppMark className="h-4 w-5" />
      <button type="button" className="ml-px h-full bg-[#ffe4b5] pr-4 pl-[7px]">
        <u>S</u>tart
      </button>
      <button type="button" className="px-[7px]">ENOVIA V5 VPM</button>
      <div className="flex flex-1">
        {menus.map((menu) => (
          <button key={menu} type="button" className="pr-4 pl-[7px]">
            <u>{menu[0]}</u>
            {menu.slice(1)}
          </button>
        ))}
      </div>
      <div className="flex gap-0.5">
        <button type="button" aria-label="Minimize document" className={box}>
          <span className="mt-1.5 h-0.5 w-1.5 bg-[#708090]" />
        </button>
        <button type="button" aria-label="Restore document" className={box}>
          <svg viewBox="0 0 9 9" className="size-[9px]" fill="none" stroke="#708090" shapeRendering="crispEdges">
            <path d="M1.5 4.5h4v3h-4zM1 4h5M3.5 3v-2h5v4h-2M3 1h6" />
          </svg>
        </button>
        <button type="button" aria-label="Close document" className={box}>
          <svg viewBox="0 0 8 8" className="size-2" fill="none" stroke="#607080" strokeWidth="2">
            <path d="M1 1l6 6M7 1L1 7" />
          </svg>
        </button>
      </div>
    </nav>
  );
}

function TopToolbars() {
  return (
    <div className="h-[79px] shrink-0 overflow-hidden border-b-2 border-[#5c5c60] bg-linear-to-b from-white via-[#cfcfe4] via-20% to-[#cfcfe4]">
      <div className="h-full bg-linear-to-b from-transparent from-80% to-[#9c9cb0]">
        <div className="flex h-[39px] pt-1 pl-[7px]">
          <Group items={wireframe} />
          <Divider tight />
          <Tool item={{ icon: "boxSelect", label: "Body filter" }} />
          <Tool item={{ icon: "boxOutline", label: "Feature filter" }} />
          <Divider />
          <Tool item={{ icon: "stack", label: "Quick select", arrow: true }} />
          <Divider />
          <Tool item={{ icon: "gridSelect", label: "Work on support" }} />
          <Divider />
          <Tool item={{ icon: "points", label: "Cloud selection" }} />
          <Group items={dressUp} className="ml-[47px]" />
          <Group items={sketchBased} className="ml-[11px]" />
          <Group items={view} className="ml-[11px]" />
          <Group items={treeTools} className="ml-[11px]" />
        </div>
        <div className="flex h-9 pt-1 pl-48">
          <Group items={surfaceBased} />
          <Group items={[{ icon: "splitTool", label: "Split body", arrow: true }]} className="ml-[73px]" />
          <Group items={annotations} className="ml-[290px]" />
          <Group items={reference} className="ml-[23px]" />
          <Group
            items={[
              { icon: "dimDisabled", label: "Constraints dialog", off: true },
              { icon: "dimension", label: "Constraint" }
            ]}
            className="ml-[18px]"
          />
          <Group items={[{ icon: "translate", label: "Translation", arrow: true }]} className="ml-3" />
          <Divider />
          <Tool item={{ icon: "mirror", label: "Mirror" }} />
          <Tool item={{ icon: "pattern", label: "Rectangular pattern", arrow: true }} />
          <Divider />
          <Tool item={{ icon: "scale", label: "Scaling", arrow: true }} />
        </div>
      </div>
    </div>
  );
}

const checker = "bg-[repeating-conic-gradient(#b8b8b8_0_25%,transparent_0_50%)] bg-[length:2px_2px]";

function PlaneGlyph() {
  return (
    <svg viewBox="0 0 31 31" className={`size-[31px] ${checker}`} shapeRendering="crispEdges" aria-hidden="true">
      <path d="M2 24h17L29 13v3L20 27H2z" fill="#0e8c98" />
      <path d="M3 22L11 14h18l-9 9z" fill="#e8d890" />
      <path d="M3 23h18M9 13h20" stroke="#28285a" strokeWidth="2" />
    </svg>
  );
}

function PartGlyph() {
  return (
    <svg viewBox="0 0 32 32" className="size-8" shapeRendering="crispEdges" aria-hidden="true">
      <path d="M11 1h14l5 5v16H11z" fill="#fff" stroke="#109898" />
      <path d="M24 1v5h6z" fill="#40e0ff" stroke="#106888" />
      <circle cx="14" cy="19" r="9" fill="#606068" />
      <circle cx="10" cy="18" r="8" fill="none" stroke="#ffe070" strokeWidth="4" strokeDasharray="4 3" />
      <circle cx="10" cy="18" r="6" fill="#ffe888" />
      <circle cx="10" cy="18" r="3" fill="#e0d800" stroke="#181820" strokeWidth="2" />
    </svg>
  );
}

function BodyGlyph() {
  return (
    <svg viewBox="0 0 31 31" className="size-[31px]" shapeRendering="crispEdges" aria-hidden="true">
      <circle cx="17" cy="15" r="11" fill="#0e9898" stroke="#001020" strokeWidth="4" strokeDasharray="5 3" />
      <circle cx="12" cy="15" r="10" fill="#18b8d8" stroke="#20d8e8" strokeWidth="3" strokeDasharray="5 3" />
      <circle cx="12" cy="15" r="7" fill="none" stroke="#ffff80" strokeWidth="3" strokeDasharray="4 4" />
      <circle cx="12" cy="15" r="4" fill="#20a0c0" stroke="#002838" strokeWidth="2" />
      <path d="M12 13v3" stroke="#ffff20" strokeWidth="2" />
      <path d="M24 6v3M26 13v3M24 20v3" stroke="#20c8d0" strokeWidth="4" />
    </svg>
  );
}

function SetGlyph() {
  return (
    <svg viewBox="0 0 31 31" className="size-[31px]" shapeRendering="crispEdges" aria-hidden="true">
      <path d="M4 6l6-4h8l4 4v9l-3 4 9 1-5 8H12l-6-4-2-5 5-4-2-5z" fill="#ffe8a0" stroke="#28285a" />
      <path d="M7 8q-2 5 2 6 2-1 4-5 4-4 4 0 0 4 3 0" fill="none" stroke="#c01828" strokeWidth="2" />
      <path d="M26 2q4 4 0 9M4 20q5-4 10-1t7-1M6 24q6-4 11-2" fill="none" stroke="#40b8e0" strokeWidth="2" />
      <path d="M10 27h13" stroke="#101040" strokeWidth="2" />
    </svg>
  );
}

const treeRows = [
  { label: "xy plane", glyph: <PlaneGlyph /> },
  { label: "yz plane", glyph: <PlaneGlyph /> },
  { label: "zx plane", glyph: <PlaneGlyph /> },
  { label: "PartBody", glyph: <BodyGlyph />, expandable: true, active: true },
  { label: "Geometrical Set.1", glyph: <SetGlyph />, expandable: true }
];

function SpecTree() {
  return (
    <div className="absolute top-[115px] left-0.5 text-[16px] text-white">
      <div className="absolute top-6 left-[7px] h-[178px] w-0.5 bg-white" />
      <div className="relative flex h-[37px] items-center">
        <PartGlyph />
        <button type="button" className="h-6 rounded-sm bg-[#333366] px-0.5 leading-6">Part3</button>
      </div>
      {treeRows.map((row) => (
        <div key={row.label} className="relative flex h-[37px] items-center even:h-9">
          {row.expandable ? (
            <button type="button" aria-label={`Expand ${row.label}`} className="flex size-4 items-center justify-center rounded-full bg-radial from-[#c8c8c8] to-[#606068]">
              <svg viewBox="0 0 12 12" className="size-3">
                <path d="M6 0v12M0 6h12" stroke="#000" strokeWidth="3" />
              </svg>
            </button>
          ) : (
            <span className="w-2" />
          )}
          <span className={row.expandable ? "h-0.5 w-[7px] bg-white" : "h-0.5 w-[15px] bg-white"} />
          <span className="ml-0.5">{row.glyph}</span>
          <button type="button" className={`ml-[3px] h-6 rounded-sm bg-[#333366] px-0.5 leading-6 ${row.active ? "underline decoration-2 underline-offset-3" : ""}`}>
            {row.label}
          </button>
        </div>
      ))}
    </div>
  );
}

function Scene() {
  return (
    <svg
      viewBox="2 121 1326 585"
      preserveAspectRatio="xMidYMid slice"
      className="absolute inset-0 size-full font-['Open_Sans','Noto_Sans',sans-serif]"
      role="img"
      aria-label="Mouse top cover part"
    >
      <defs>
        <radialGradient id="sheen" gradientUnits="userSpaceOnUse" cx="0" cy="0" r="1" gradientTransform="translate(385 305) rotate(-42) scale(130 30)">
          <stop offset="0" stopColor="#28282a" />
          <stop offset="0.5" stopColor="#161618" />
          <stop offset="1" stopColor="#08080c" />
        </radialGradient>
        <linearGradient id="glass" x1="0" y1="1" x2="1" y2="0">
          <stop offset="0" stopColor="#484878" />
          <stop offset="0.5" stopColor="#5a5a86" />
          <stop offset="1" stopColor="#444474" />
        </linearGradient>
      </defs>
      <path
        fill="url(#sheen)"
        d="M349 348C349 336 358 324 372 311C400 284 440 249 482 218C520 192 551 180 584 180C650 180 720 197 800 228C870 257 940 296 998 332C1024 350 1038 378 1038 404C1037 447 1015 488 982 521C945 554 890 572 826 574C797 573 765 562 741 543C700 509 650 472 590 437C520 398 450 371 376 367C359 366 350 358 349 348Z"
      />
      <path d="M744 348Q780 365 814 389" stroke="#44447a" strokeWidth="2" fill="none" />
      <path d="M906 455Q945 484 982 521" stroke="#50507c" strokeWidth="2" fill="none" />
      <path d="M825 383L914 447L904 454L907 457L896 463Q850 428 806 399L814 394L817 388Z" fill="#424273" />

      <g stroke="#e0c8ff" strokeWidth="2" strokeLinejoin="round">
        <path d="M1199 164C1180 158 1170 168 1173 187L1183 190Q1188 176 1199 164Z" fill="#204c66" />
        <path d="M1199 164L1208 201L1183 190Q1188 176 1199 164Z" fill="#003058" />
        <path d="M1183 190L1208 201L1178 228Q1176 208 1183 190Z" fill="#000048" />
        <path d="M1214 209L1251 224L1222 250C1206 259 1182 250 1182 236C1183 223 1197 212 1214 209Z" fill="#204c66" />
        <path d="M1196 155L1216 230" />
      </g>
      <circle cx="1196" cy="155" r="4" fill="#e0c8ff" />
      <rect x="1212" y="226" width="10" height="10" fill="#d80000" />
      <g fill="#ffff00" fontSize="14">
        <text x="1182" y="158">z</text>
        <text x="1158" y="191">x</text>
        <text x="1162" y="231">y</text>
      </g>

      <g fill="url(#glass)" stroke="#8484ac" strokeWidth="5">
        <circle cx="1284" cy="357" r="27" />
        <rect x="1261" y="396" width="49" height="48" />
        <rect x="1248" y="454" width="74" height="29" />
      </g>
      <g fill="#8080a8">
        <circle cx="1279" cy="371" r="5" />
        <rect x="1267" y="430" width="8" height="8" />
        <path d="M1254 469L1314 478H1254Z" />
      </g>

      <path d="M1288 658L1291 676L1277 670M1291 676L1280 686" stroke="#fff" fill="none" />
      <g fill="#fff" fontSize="13">
        <text x="1286" y="658">z</text>
        <text x="1273" y="670">x</text>
        <text x="1275" y="690">y</text>
      </g>
    </svg>
  );
}

function SideToolbar() {
  return (
    <aside className="w-[38px] shrink-0 border-l-2 border-white bg-linear-to-r from-white via-[#cfcfe4] via-20% to-[#cfcfe4]">
      <div className="h-full bg-linear-to-r from-transparent from-75% to-[#a4a4b8] pt-1">
        <SideGroup items={[{ icon: "gear", label: "Part Design workbench" }]} />
        <SideGroup items={[{ icon: "sketch", label: "Sketch", arrow: true }]} className="mt-3" />
        <SideGroup
          items={[
            { icon: "textNote", label: "Text with leader", arrow: true },
            { icon: "flagNote", label: "Flag note with leader", arrow: true },
            { icon: "stamp", label: "Annotation plane" }
          ]}
          className="mt-[71px]"
        />
        <SideGroup items={[{ icon: "arrow", label: "Select", arrow: true }]} className="mt-3" />
        <SideGroup
          items={[
            { icon: "ruler", label: "Measure between" },
            { icon: "clamp", label: "Measure item" },
            { icon: "weight", label: "Measure inertia" }
          ]}
          className="mt-[17px]"
        />
        <SideGroup items={[{ icon: "magnet", label: "Dynamic sectioning" }]} className="mt-2.5" />
        <SideGroup items={[{ icon: "camera", label: "Capture" }]} className="mt-[11px]" />
      </div>
    </aside>
  );
}

function Logo() {
  return (
    <svg viewBox="0 0 42 34" className="h-[34px] w-[42px]" role="img" aria-label="DS CATIA">
      <path d="M10 3q9-2 8 1-1 3-6 5" fill="none" stroke="#e02828" strokeWidth="2" />
      <path d="M6 12h5q4 1 1 6-3 4-10 5l4-9" fill="none" stroke="#38207c" strokeWidth="2" />
      <path d="M26 10q-9-1-9 2l4 4q1 4-8 4" fill="none" stroke="#f09810" strokeWidth="2" />
      <text x="7" y="32" className="font-['Liberation_Sans',sans-serif] text-[10px] font-bold italic" fill="#38207c">CATIA</text>
    </svg>
  );
}

function BottomToolbar() {
  return (
    <div className="h-[38px] shrink-0 overflow-hidden border-b border-[#505058] bg-linear-to-b from-white via-[#cfcfe4] via-40% to-[#cfcfe4]">
      <div className="flex h-full bg-linear-to-b from-transparent from-60% to-[#9c9cb0] pt-[5px] pl-1.5">
        <Group
          items={[
            { icon: "apply", label: "Draft analysis" },
            { icon: "analysis", label: "Curvature analysis" },
            { icon: "target", label: "Tap analysis" },
            { icon: "beam", label: "Wall thickness analysis" }
          ]}
        />
        <Group
          items={[
            { icon: "catalog", label: "Instantiate from document", arrow: true },
            { icon: "folderMove", label: "Power copy", arrow: true }
          ]}
          className="ml-3"
        />
        <Group items={standard} className="ml-2.5" />
        <Group items={knowledge} className="ml-2.5" />
        <Group items={[{ icon: "publish", label: "Publication" }]} className="ml-2" />
        <Group items={tools} className="ml-[11px]" />
        <div className="relative mt-1 h-[22px] w-[162px] shrink-0">
          <select
            aria-label="In work object"
            defaultValue="PartBody"
            className="h-full w-full appearance-none border-2 border-t-[#707070] border-r-white border-b-white border-l-[#707070] bg-white pl-px text-[12px] leading-4"
          >
            <option>PartBody</option>
            <option>Geometrical Set.1</option>
          </select>
          <div className="pointer-events-none absolute top-0.5 right-0.5 h-[18px] w-4 border border-t-white border-r-[#606060] border-b-[#606060] border-l-white bg-[#e4e4e8]">
            <DropMark className="top-1.5 left-1" />
          </div>
        </div>
        <div className="-mt-1 mr-1 ml-auto">
          <Logo />
        </div>
      </div>
    </div>
  );
}

function StatusBar() {
  const box = "flex h-full w-8 items-center justify-center border border-t-white border-r-[#808088] border-b-[#808088] border-l-white";
  return (
    <footer className="flex h-6 shrink-0 items-center border-b-2 border-[#202024] bg-[#cfcfe4] text-[12px]">
      <p className="flex-1 pl-[3px]">Select an object or a command</p>
      <input
        aria-label="Power input"
        className="h-full w-[300px] border-2 border-t-[#707070] border-r-[#e8e8e8] border-b-[#e8e8e8] border-l-[#707070] bg-white px-1"
      />
      <div className="flex h-full gap-0.5">
        <button type="button" aria-label="Power input mode" className={box}>
          <svg viewBox="0 0 16 12" className="h-3 w-4" fill="none" stroke="#909098" shapeRendering="crispEdges">
            <path d="M2.5 2.5h6v6h-6zM14.5 0v11.5h-14M11 9.5h1" />
          </svg>
        </button>
        <button type="button" aria-label="Command info" className={box}>
          <svg viewBox="0 0 16 12" className="h-3 w-4" fill="none" stroke="#909098">
            <circle cx="7" cy="6" r="4" />
            <path d="M7.5 5v4M7.5 3v1M14.5 0v11.5h-14" />
          </svg>
        </button>
      </div>
    </footer>
  );
}

export default function App() {
  return (
    <div className="flex h-screen flex-col overflow-hidden bg-[#cfcfe4] font-[Roboto,'Noto_Sans',sans-serif] text-black">
      <svg className="absolute size-0" aria-hidden="true">
        <defs>
          <pattern id="dither" width="2" height="2" patternUnits="userSpaceOnUse">
            <path d="M0 0h1v1H0zM1 1h1v1H1z" fill="#b8b8c4" />
          </pattern>
          <pattern id="weave" width="4" height="4" patternUnits="userSpaceOnUse">
            <path d="M0 0h2v2H0zM2 2h2v2H2z" fill="#104858" />
          </pattern>
        </defs>
      </svg>
      <TitleBar />
      <MenuBar />
      <TopToolbars />
      <div className="flex min-h-0 flex-1">
        <main className="relative min-w-0 flex-1 overflow-hidden border-l-2 border-[#8c8c84] bg-linear-to-b from-[#333366] via-[#474776] via-67% to-[#acacc2] font-['Open_Sans','Noto_Sans',sans-serif]">
          <Scene />
          <SpecTree />
        </main>
        <SideToolbar />
      </div>
      <BottomToolbar />
      <StatusBar />
    </div>
  );
}
